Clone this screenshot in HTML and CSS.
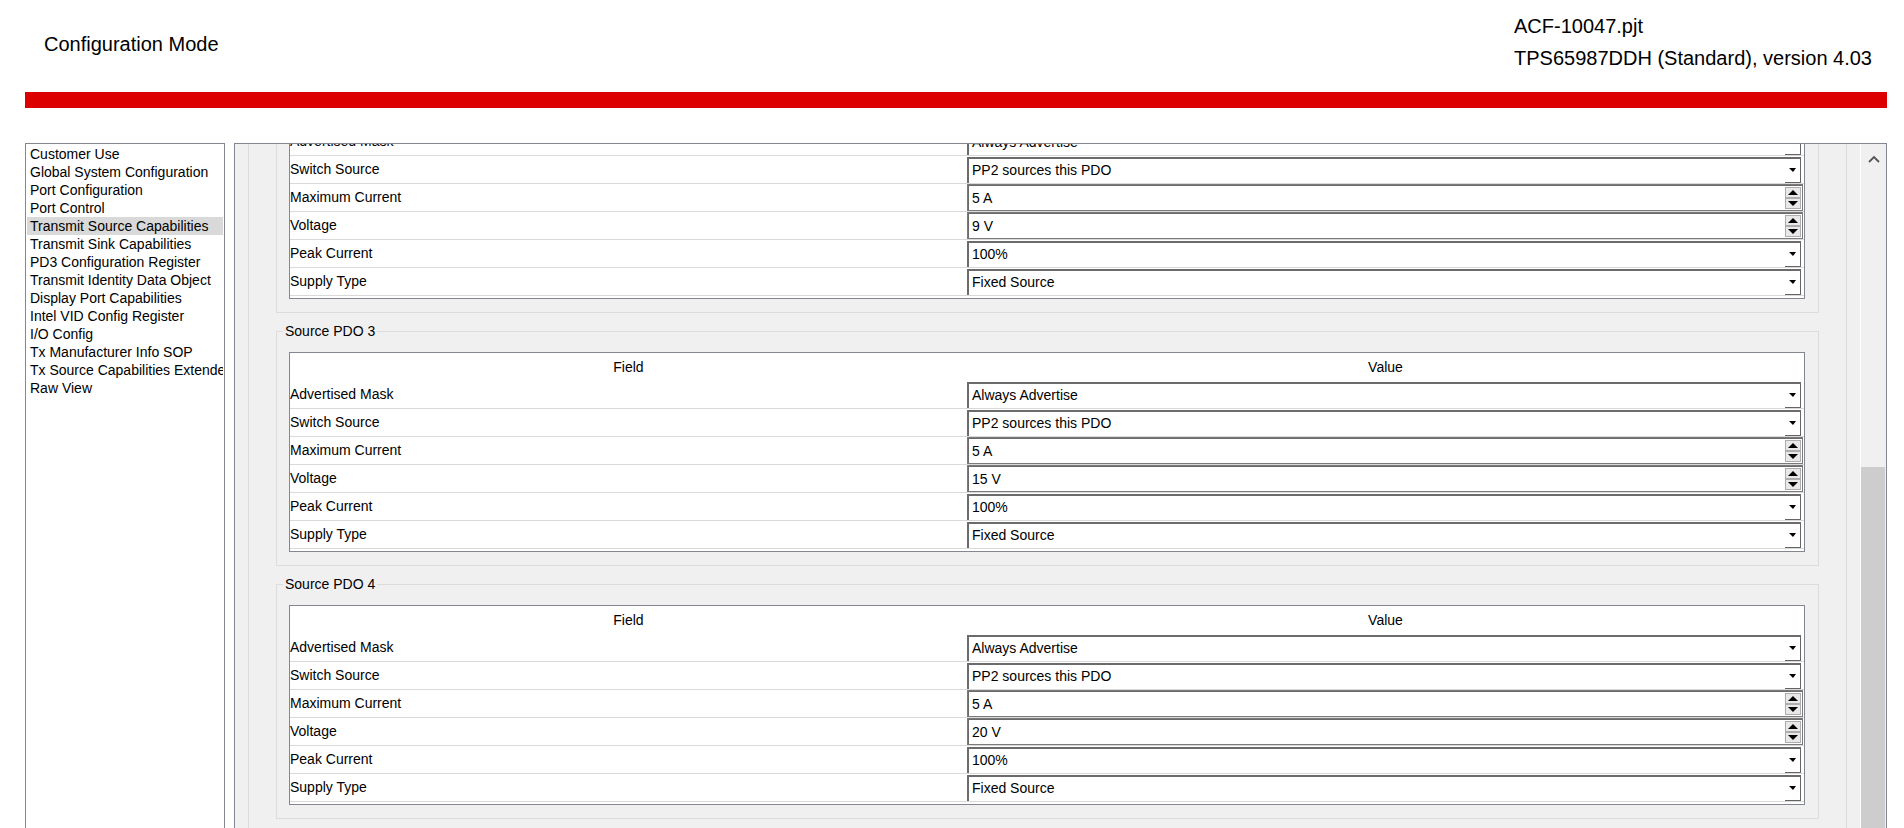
FILE: index.html
```html
<!DOCTYPE html>
<html lang="en">
<head>
	<meta charset="UTF-8">
	<title>Configuration Mode</title>
	<link rel="stylesheet" href="styles.css">
</head>
<body>
   <div class="top">
   	<div class="mode">Configuration Mode</div>
   	<div class="proj">
   		<div>ACF-10047.pjt</div>
   		<div>TPS65987DDH (Standard), version 4.03</div>
   	</div>
   </div>
   <div class="redbar"></div>

   <div class="work">
   	<ul class="nav">
   		<li>Customer Use</li>
   		<li>Global System Configuration</li>
   		<li>Port Configuration</li>
   		<li>Port Control</li>
   		<li class="active">Transmit Source Capabilities</li>
   		<li>Transmit Sink Capabilities</li>
   		<li>PD3 Configuration Register</li>
   		<li>Transmit Identity Data Object</li>
   		<li>Display Port Capabilities</li>
   		<li>Intel VID Config Register</li>
   		<li>I/O Config</li>
   		<li>Tx Manufacturer Info SOP</li>
   		<li>Tx Source Capabilities Extended</li>
   		<li>Raw View</li>
   	</ul>

   	<div class="panel">
   		<div class="view">
   			<div class="outer">
   				<fieldset class="pdo">
   					<legend>Source PDO 2</legend>
   					<div class="grid">
   						<div class="head"><div class="fld">Field</div><div class="val">Value</div></div>
   						<div class="row"><div class="fld">Advertised Mask</div><div class="val"><div class="combo"><span>Always Advertise</span><b class="drop"></b></div></div></div>
   						<div class="row"><div class="fld">Switch Source</div><div class="val"><div class="combo"><span>PP2 sources this PDO</span><b class="drop"></b></div></div></div>
   						<div class="row"><div class="fld">Maximum Current</div><div class="val"><div class="spin"><span>5 A</span><b class="updown"><i class="up"></i><i class="dn"></i></b></div></div></div>
   						<div class="row"><div class="fld">Voltage</div><div class="val"><div class="spin"><span>9 V</span><b class="updown"><i class="up"></i><i class="dn"></i></b></div></div></div>
   						<div class="row"><div class="fld">Peak Current</div><div class="val"><div class="combo"><span>100%</span><b class="drop"></b></div></div></div>
   						<div class="row"><div class="fld">Supply Type</div><div class="val"><div class="combo"><span>Fixed Source</span><b class="drop"></b></div></div></div>
   					</div>
   				</fieldset>

   				<fieldset class="pdo">
   					<legend>Source PDO 3</legend>
   					<div class="grid">
   						<div class="head"><div class="fld">Field</div><div class="val">Value</div></div>
   						<div class="row"><div class="fld">Advertised Mask</div><div class="val"><div class="combo"><span>Always Advertise</span><b class="drop"></b></div></div></div>
   						<div class="row"><div class="fld">Switch Source</div><div class="val"><div class="combo"><span>PP2 sources this PDO</span><b class="drop"></b></div></div></div>
   						<div class="row"><div class="fld">Maximum Current</div><div class="val"><div class="spin"><span>5 A</span><b class="updown"><i class="up"></i><i class="dn"></i></b></div></div></div>
   						<div class="row"><div class="fld">Voltage</div><div class="val"><div class="spin"><span>15 V</span><b class="updown"><i class="up"></i><i class="dn"></i></b></div></div></div>
   						<div class="row"><div class="fld">Peak Current</div><div class="val"><div class="combo"><span>100%</span><b class="drop"></b></div></div></div>
   						<div class="row"><div class="fld">Supply Type</div><div class="val"><div class="combo"><span>Fixed Source</span><b class="drop"></b></div></div></div>
   					</div>
   				</fieldset>

   				<fieldset class="pdo">
   					<legend>Source PDO 4</legend>
   					<div class="grid">
   						<div class="head"><div class="fld">Field</div><div class="val">Value</div></div>
   						<div class="row"><div class="fld">Advertised Mask</div><div class="val"><div class="combo"><span>Always Advertise</span><b class="drop"></b></div></div></div>
   						<div class="row"><div class="fld">Switch Source</div><div class="val"><div class="combo"><span>PP2 sources this PDO</span><b class="drop"></b></div></div></div>
   						<div class="row"><div class="fld">Maximum Current</div><div class="val"><div class="spin"><span>5 A</span><b class="updown"><i class="up"></i><i class="dn"></i></b></div></div></div>
   						<div class="row"><div class="fld">Voltage</div><div class="val"><div class="spin"><span>20 V</span><b class="updown"><i class="up"></i><i class="dn"></i></b></div></div></div>
   						<div class="row"><div class="fld">Peak Current</div><div class="val"><div class="combo"><span>100%</span><b class="drop"></b></div></div></div>
   						<div class="row"><div class="fld">Supply Type</div><div class="val"><div class="combo"><span>Fixed Source</span><b class="drop"></b></div></div></div>
   					</div>
   				</fieldset>
   			</div>
   		</div>
   		<div class="vscroll">
   			<div class="sb-up"><svg width="12" height="8" viewBox="0 0 12 8"><polyline points="1,7 6,2 11,7" fill="none" stroke="#555" stroke-width="1.8"/></svg></div>
   			<div class="sb-thumb"></div>
   		</div>
   	</div>
   </div>
</body>
</html>
```

FILE: styles.css
```css
body,ul,li{margin:0;padding:0;list-style:none;}
body{
	background:#fff;
	color:#000;
	font-family:"Liberation Sans",Arial,sans-serif;
	height:828px;
	overflow:hidden;
}
.top{
	display:flex;
	align-items:center;
	height:64px;
	padding:10px 32px 0 44px;
}
.mode{
	font-size:20px;
	line-height:32px;
	padding-top:3px;
}
.proj{
	margin-left:auto;
	font-size:20px;
	line-height:32px;
}
.redbar{
	height:16px;
	margin:18px 17px 0 25px;
	background:#dd0000;
}
.work{
	display:flex;
	height:685px;
	margin:35px 0 0 25px;
}
.nav{
	width:200px;
	box-sizing:border-box;
	border:1px solid #828790;
	border-bottom:0;
	padding:1px;
	background:#fff;
	font-size:14px;
}
.nav li{
	height:18px;
	line-height:18px;
	padding-left:3px;
	white-space:nowrap;
	overflow:hidden;
}
.nav .active{background:#d9d9d9;}

.panel{
	display:flex;
	width:1653px;
	margin-left:9px;
	box-sizing:border-box;
	border:1px solid #828790;
	border-bottom:0;
	background:#f0f0f0;
}
.view{
	flex:1;
	overflow:hidden;
}
.outer{
	margin:-88px 13px 0;
	padding:13px 27px;
	border:1px solid #dcdcdc;
}
.pdo{
	margin:0;
	padding:13px 13px 13px 12px;
	border:1px solid #dcdcdc;
	min-inline-size:0;
}
.pdo + .pdo{margin-top:10px;}
.pdo legend{
	margin-left:-6px;
	padding:0 2px;
	font-size:14px;
	line-height:16px;
}
.grid{
	border:1px solid #828790;
	background:#fff;
	padding-bottom:2px;
	font-size:14px;
}
.head,.row{
	display:flex;
	height:28px;
	box-sizing:border-box;
}
.row{border-bottom:1px solid #d9d9d9;}
.fld{
	flex:none;
	width:677px;
	line-height:27px;
	white-space:nowrap;
}
.val{
	flex:1;
	min-width:0;
}
.head .fld,.head .val{
	line-height:28px;
	text-align:center;
}

.combo{
	display:flex;
	align-items:center;
	height:26px;
	margin:1px 3px 0 0;
	box-sizing:border-box;
	border-top:2px solid #6b6b6b;
	border-left:2px solid #6b6b6b;
	background:#fff;
}
.combo span{flex:1;padding:0 0 3px 3px;}
.drop{
	display:flex;
	align-items:center;
	justify-content:center;
	align-self:stretch;
	width:16px;
	box-sizing:border-box;
	border-right:1px solid #646464;
	border-bottom:1px solid #646464;
}
.drop:after{
	content:"";
	margin-top:-2px;
	border-top:4px solid #000;
	border-left:4px solid transparent;
	border-right:3px solid transparent;
}

.spin{
	display:flex;
	align-items:center;
	height:27px;
	margin-right:1px;
	box-sizing:border-box;
	border:1px solid #7a7a7a;
	box-shadow:inset 1px 1px #6b6b6b;
	background:#fff;
}
.spin span{flex:1;padding-left:4px;}
.updown{
	display:flex;
	flex-direction:column;
	margin-right:1px;
}
.updown i{
	display:flex;
	align-items:center;
	justify-content:center;
	width:16px;
	height:11px;
	box-sizing:border-box;
	border:1px solid #adadad;
	background:#e8e8e8;
}
.updown .up:after{
	content:"";
	border-bottom:5px solid #000;
	border-left:5px solid transparent;
	border-right:5px solid transparent;
}
.updown .dn:after{
	content:"";
	border-top:5px solid #000;
	border-left:5px solid transparent;
	border-right:5px solid transparent;
}

.vscroll{
	flex:none;
	width:26px;
	box-sizing:border-box;
	border-left:1px solid #fff;
	display:flex;
	flex-direction:column;
}
.sb-up{
	flex:none;
	display:flex;
	align-items:center;
	justify-content:center;
	height:30px;
}
.sb-thumb{
	flex:1;
	margin:293px 1px 0 0;
	background:#cdcdcd;
}
```
